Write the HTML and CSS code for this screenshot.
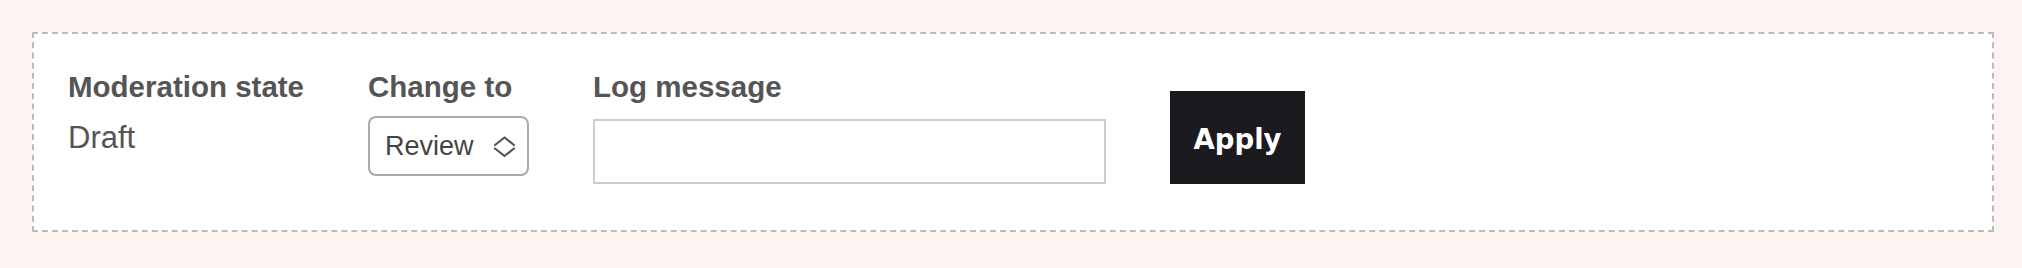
FILE: index.html
```html
<!DOCTYPE html>
<html lang='en'>
<head>
    <meta charset='UTF-8'>
    <meta name='viewport' content='width=device-width, initial-scale=1.0'>
    <title>Content moderation</title>
    <link rel="stylesheet" href="styles.css">
</head>

<body>
    <form class='moderation-control'>
        <div class='field'>
            <div class='field-label'>Moderation state</div>
            <div class='current-state'>Draft</div>
        </div>
        <div class='field'>
            <label class='field-label' for='new-state'>Change to</label>
            <div class='select-wrap'>
                <select id='new-state' class='state-select'>
                    <option>Review</option>
                    <option>Draft</option>
                    <option>Published</option>
                </select>
                <svg class='chevrons' width='23' height='22' viewBox='0 0 23 22' fill='none' stroke='#555' stroke-width='2.2' stroke-linecap='round' stroke-linejoin='round'>
                    <path d='M2 9 L11.5 1.5 L21 9' />
                    <path d='M2 12.5 L11.5 20 L21 12.5' />
                </svg>
            </div>
        </div>
        <div class='field'>
            <label class='field-label' for='log-message'>Log message</label>
            <input id='log-message' class='log-input' type='text'>
        </div>
        <button type='button' class='apply-btn'>Apply</button>
    </form>
</body>

</html>
```

FILE: styles.css
```css
* {
    margin: 0px;
    padding: 0px;
    box-sizing: border-box;
}

body {
    background-color: #fdf4f2;
    font-family: 'Liberation Sans', Arial, Helvetica, sans-serif;
    color: #555;
    width: 2022px;
    height: 268px;
    padding: 32px 28px 35px 32px;
}

.moderation-control {
    display: flex;
    align-items: flex-start;
    gap: 64px;
    height: 200px;
    background-color: #fff;
    border: 2px dashed #bbb;
    padding: 36px 33px 0 34px;
}

.field {
    display: flex;
    flex-direction: column;
}

.field-label {
    display: block;
    font-size: 29.5px;
    font-weight: bold;
    line-height: normal;
}

.current-state {
    font-size: 31px;
    line-height: normal;
    margin-top: 16px;
}

/* Select */
.select-wrap {
    position: relative;
    margin-top: 12px;
}

.state-select {
    -webkit-appearance: none;
    appearance: none;
    width: 161px;
    height: 60px;
    border: 2px solid #aaa;
    border-radius: 8px;
    background-color: #fff;
    color: #444;
    font-family: 'Liberation Sans', Arial, sans-serif;
    font-size: 27px;
    padding: 0 50px 0 15px;
}

.chevrons {
    position: absolute;
    top: 20px;
    right: 13px;
    pointer-events: none;
}

/* Log message */
.log-input {
    width: 513px;
    height: 65px;
    margin-top: 15px;
    border: 2px solid #ccc;
    background-color: #fff;
    font-size: 24px;
    padding: 0 12px;
}

/* Apply */
.apply-btn {
    width: 135px;
    height: 93px;
    margin-top: 21px;
    margin-left: 0;
    background-color: #1b1a1f;
    color: #fff;
    border: none;
    font-family: 'DejaVu Sans', sans-serif;
    font-weight: bold;
    font-size: 27.5px;
    padding-top: 2px;
    cursor: pointer;
}
```
